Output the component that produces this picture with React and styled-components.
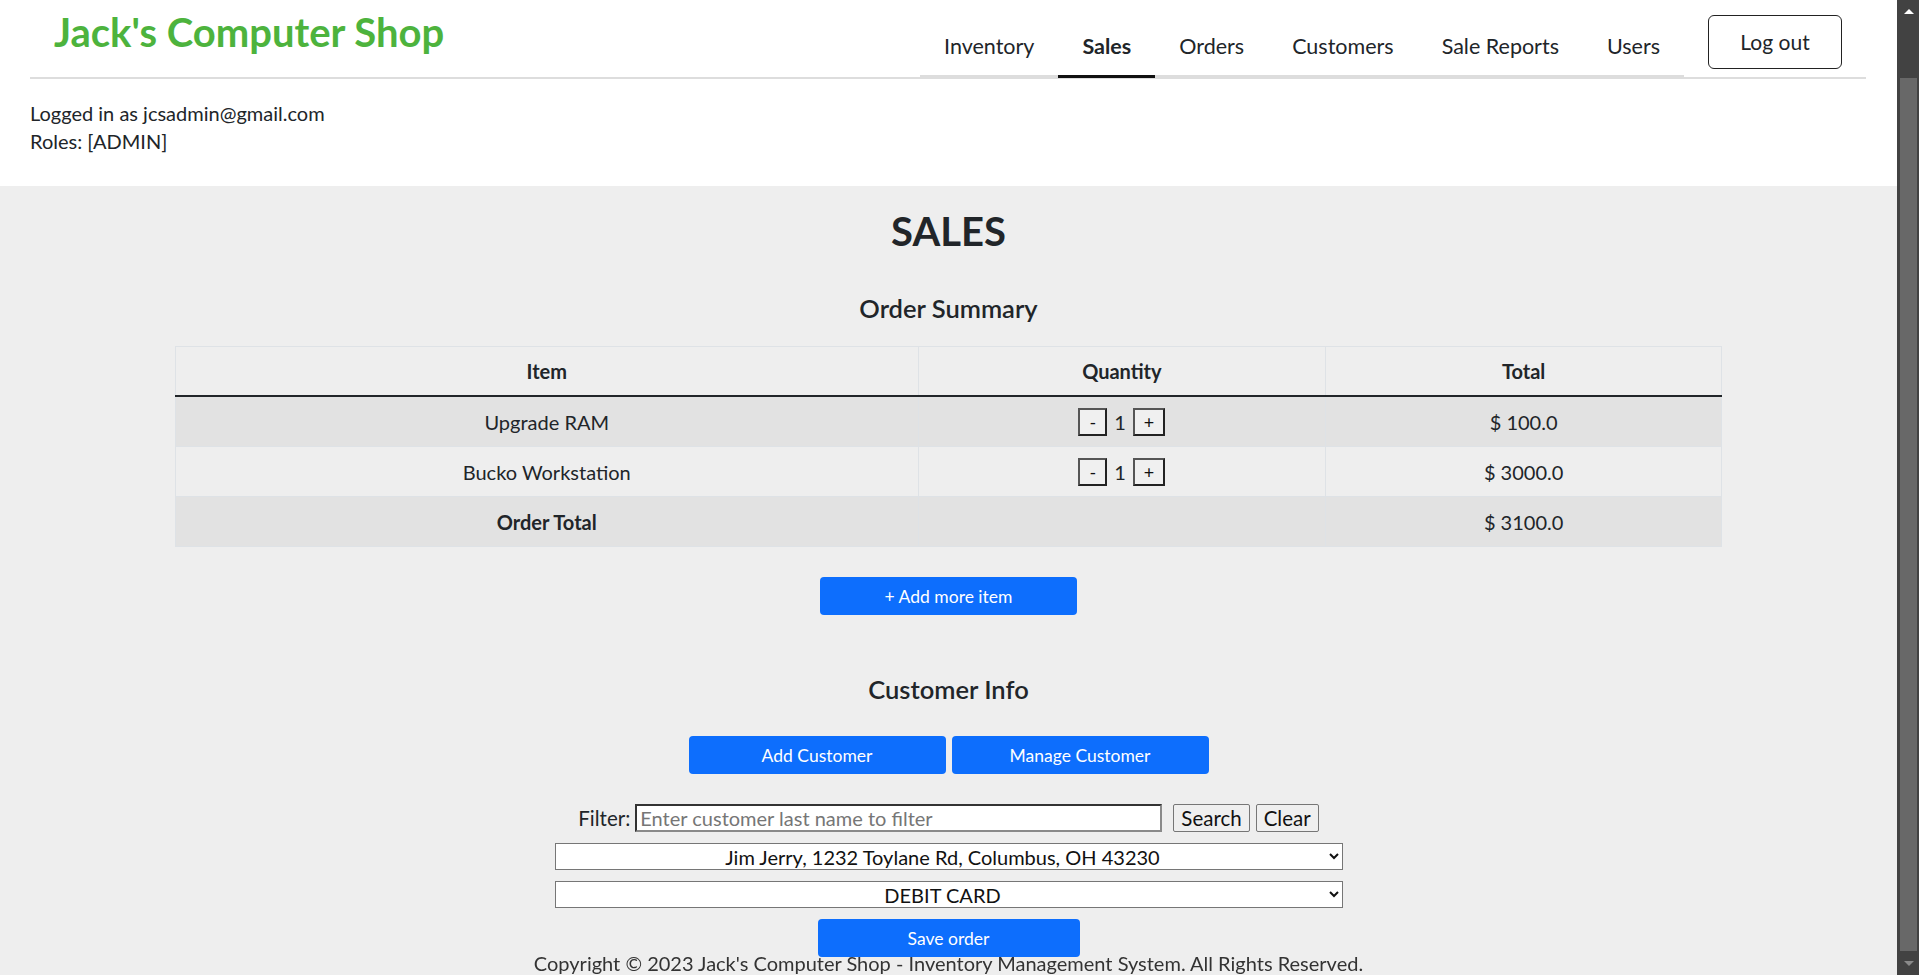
import React from 'react';
import styled, { createGlobalStyle } from 'styled-components';

const GlobalStyle = createGlobalStyle`
  html, body { margin: 0; padding: 0; overflow: hidden; }
  body {
    font-family: Lato, "Noto Sans", sans-serif;
    color: #212529;
    background: #ffffff;
  }
`;

const Frame = styled.div`
  display: flex;
  height: 100vh;
  overflow: hidden;
`;

const Page = styled.div`
  flex: 1;
  min-width: 0;
  overflow: hidden;
`;

const ScrollBar = styled.div`
  flex: none;
  width: 22px;
  box-sizing: border-box;
  background: #424242;
  display: flex;
  flex-direction: column;
  align-items: center;
  padding: 9px 0;
`;

const Arrow = styled.div`
  width: 0;
  height: 0;
  margin-left: 1px;
  border-left: 5px solid transparent;
  border-right: 5px solid transparent;
  ${p => (p.$down
    ? 'border-top: 5px solid #8a8a8a;'
    : 'border-bottom: 5px solid #ffffff;')}
`;

const Thumb = styled.div`
  flex: 1;
  align-self: stretch;
  margin: 64px 2px 10px 3px;
  background: #686868;
`;

const Header = styled.header`
  box-sizing: border-box;
  height: 79px;
  margin: 0 31px 0 30px;
  border-bottom: 2px solid #dddddd;
  display: flex;
  align-items: flex-start;
`;

const Brand = styled.h1`
  flex: 1;
  margin: 0 0 0 24px;
  padding-top: 8px;
  font-size: 40px;
  line-height: 48px;
  font-weight: 700;
  color: #4db33d;
`;

const NavList = styled.nav`
  align-self: flex-end;
  display: flex;
  border-bottom: 3px solid #dddddd;
  margin-bottom: -1px;
`;

const NavTab = styled.a`
  display: block;
  padding: 0 24px 17px;
  font-size: 21.5px;
  line-height: 24px;
  color: #212529;
  text-decoration: none;
  font-weight: ${p => (p.$active ? 700 : 400)};
  border-bottom: 3px solid ${p => (p.$active ? '#111111' : 'transparent')};
  margin-bottom: -3px;
`;

const LogoutButton = styled.button`
  margin: 15px 24px 0 24px;
  width: 134px;
  height: 54px;
  background: #ffffff;
  border: 1px solid #222222;
  border-radius: 6px;
  font-family: Lato, sans-serif;
  font-size: 21px;
  color: #212529;
  padding: 0 0 2px;
`;

const Info = styled.div`
  padding: 20px 30px 31px;
  font-size: 20px;
  line-height: 28px;
`;

const Main = styled.main`
  background: #eeeeee;
  padding: 21px 0 20px;
  display: flex;
  flex-direction: column;
  align-items: center;
`;

const PageTitle = styled.h1`
  margin: 0;
  font-size: 40px;
  line-height: 48px;
  font-weight: 700;
`;

const SectionTitle = styled.h3`
  margin: ${p => p.$top}px 0 0;
  font-size: 25.5px;
  line-height: 34px;
  font-weight: 600;
`;

const Table = styled.table`
  margin-top: 21px;
  width: 1547px;
  border-collapse: collapse;
  font-size: 20px;
  table-layout: fixed;
`;

const Th = styled.th`
  height: 48px;
  padding: 0;
  font-weight: 700;
  border: 1px solid #dee2e6;
  border-bottom: 2px solid #212529;
  text-align: center;
`;

const Row = styled.tr`
  background: ${p => (p.$striped ? '#e2e2e2' : '#eeeeee')};
`;

const Td = styled.td`
  height: 49px;
  padding: 0;
  text-align: center;
  border: 1px solid #dee2e6;
  font-weight: ${p => (p.$bold ? 700 : 400)};
`;

const Qty = styled.div`
  display: inline-flex;
  align-items: center;
  gap: 7px;
`;

const QtyButton = styled.button`
  height: 28px;
  padding: 0 9px;
  background: #f0f0f0;
  border: 2px solid;
  border-color: #555555 #222222 #222222 #555555;
  font-family: Lato, sans-serif;
  font-size: 18px;
  color: #111;
  line-height: 1;
`;

const PrimaryButton = styled.button`
  width: ${p => p.$w || 257}px;
  height: 38px;
  margin-top: ${p => p.$top || 0}px;
  background: #0d6efd;
  color: #ffffff;
  border: none;
  border-radius: 4px;
  font-family: Lato, sans-serif;
  font-size: 17.5px;
`;

const ButtonRow = styled.div`
  margin-top: 30px;
  display: flex;
  gap: 6px;
`;

const FilterRow = styled.div`
  margin-top: 30px;
  display: flex;
  align-items: center;
  font-size: 20.5px;
`;

const FilterLabel = styled.label`
  margin-right: 5px;
`;

const FilterInput = styled.input`
  box-sizing: border-box;
  width: 527px;
  height: 28px;
  padding: 0 3px;
  border: 2px solid;
  border-color: #333333 #8a8a8a #8a8a8a #333333;
  background: #ffffff;
  font-family: Lato, sans-serif;
  font-size: 20px;
  color: #212529;
  &::placeholder { color: #767676; }
`;

const PlainButton = styled.button`
  box-sizing: border-box;
  height: 28px;
  margin-left: ${p => p.$gap}px;
  padding: 0 7px;
  background: #efefef;
  border: 1px solid #767676;
  border-radius: 2px;
  font-family: Lato, sans-serif;
  font-size: 20.5px;
  color: #111;
`;

const Select = styled.select`
  box-sizing: border-box;
  width: 788px;
  height: 27px;
  margin-top: 11px;
  padding: 0 4px;
  background: #ffffff;
  border: 1px solid #767676;
  border-radius: 0;
  font-family: Lato, sans-serif;
  font-size: 20px;
  color: #111;
  text-align: center;
  text-align-last: center;
`;

const Footer = styled.footer`
  position: fixed;
  left: 0;
  right: 22px;
  bottom: 0;
  text-align: center;
  font-size: 20px;
  line-height: 24px;
  color: #333;
`;

const navItems = ['Inventory', 'Sales', 'Orders', 'Customers', 'Sale Reports', 'Users'];

const items = [
  { name: 'Upgrade RAM', qty: 1, total: '$ 100.0' },
  { name: 'Bucko Workstation', qty: 1, total: '$ 3000.0' },
];

export default function App() {
  return (
    <>
      <GlobalStyle />
      <Frame>
        <Page>
          <Header>
            <Brand>Jack's Computer Shop</Brand>
            <NavList>
              {navItems.map(n => (
                <NavTab key={n} href="#" $active={n === 'Sales'}>{n}</NavTab>
              ))}
            </NavList>
            <LogoutButton>Log out</LogoutButton>
          </Header>
          <Info>
            <div>Logged in as jcsadmin@gmail.com</div>
            <div>Roles: [ADMIN]</div>
          </Info>
          <Main>
            <PageTitle>SALES</PageTitle>
            <SectionTitle $top={36}>Order Summary</SectionTitle>
            <Table>
              <colgroup>
                <col style={{ width: '48.03%' }} />
                <col style={{ width: '26.37%' }} />
                <col style={{ width: '25.6%' }} />
              </colgroup>
              <thead>
                <tr>
                  <Th>Item</Th>
                  <Th>Quantity</Th>
                  <Th>Total</Th>
                </tr>
              </thead>
              <tbody>
                {items.map((it, i) => (
                  <Row key={it.name} $striped={i % 2 === 0}>
                    <Td>{it.name}</Td>
                    <Td>
                      <Qty>
                        <QtyButton>-</QtyButton>
                        <span>{it.qty}</span>
                        <QtyButton>+</QtyButton>
                      </Qty>
                    </Td>
                    <Td>{it.total}</Td>
                  </Row>
                ))}
                <Row $striped>
                  <Td $bold>Order Total</Td>
                  <Td />
                  <Td>$ 3100.0</Td>
                </Row>
              </tbody>
            </Table>
            <PrimaryButton $top={30}>+ Add more item</PrimaryButton>
            <SectionTitle $top={57}>Customer Info</SectionTitle>
            <ButtonRow>
              <PrimaryButton>Add Customer</PrimaryButton>
              <PrimaryButton>Manage Customer</PrimaryButton>
            </ButtonRow>
            <FilterRow>
              <FilterLabel>Filter:</FilterLabel>
              <FilterInput placeholder="Enter customer last name to filter" />
              <PlainButton $gap={11}>Search</PlainButton>
              <PlainButton $gap={6}>Clear</PlainButton>
            </FilterRow>
            <Select defaultValue="jim">
              <option value="jim">Jim Jerry, 1232 Toylane Rd, Columbus, OH 43230</option>
            </Select>
            <Select defaultValue="debit">
              <option value="debit">DEBIT CARD</option>
            </Select>
            <PrimaryButton $top={11} $w={262}>Save order</PrimaryButton>
          </Main>
        </Page>
        <ScrollBar>
          <Arrow />
          <Thumb />
          <Arrow $down />
        </ScrollBar>
      </Frame>
      <Footer>Copyright © 2023 Jack's Computer Shop - Inventory Management System. All Rights Reserved.</Footer>
    </>
  );
}
